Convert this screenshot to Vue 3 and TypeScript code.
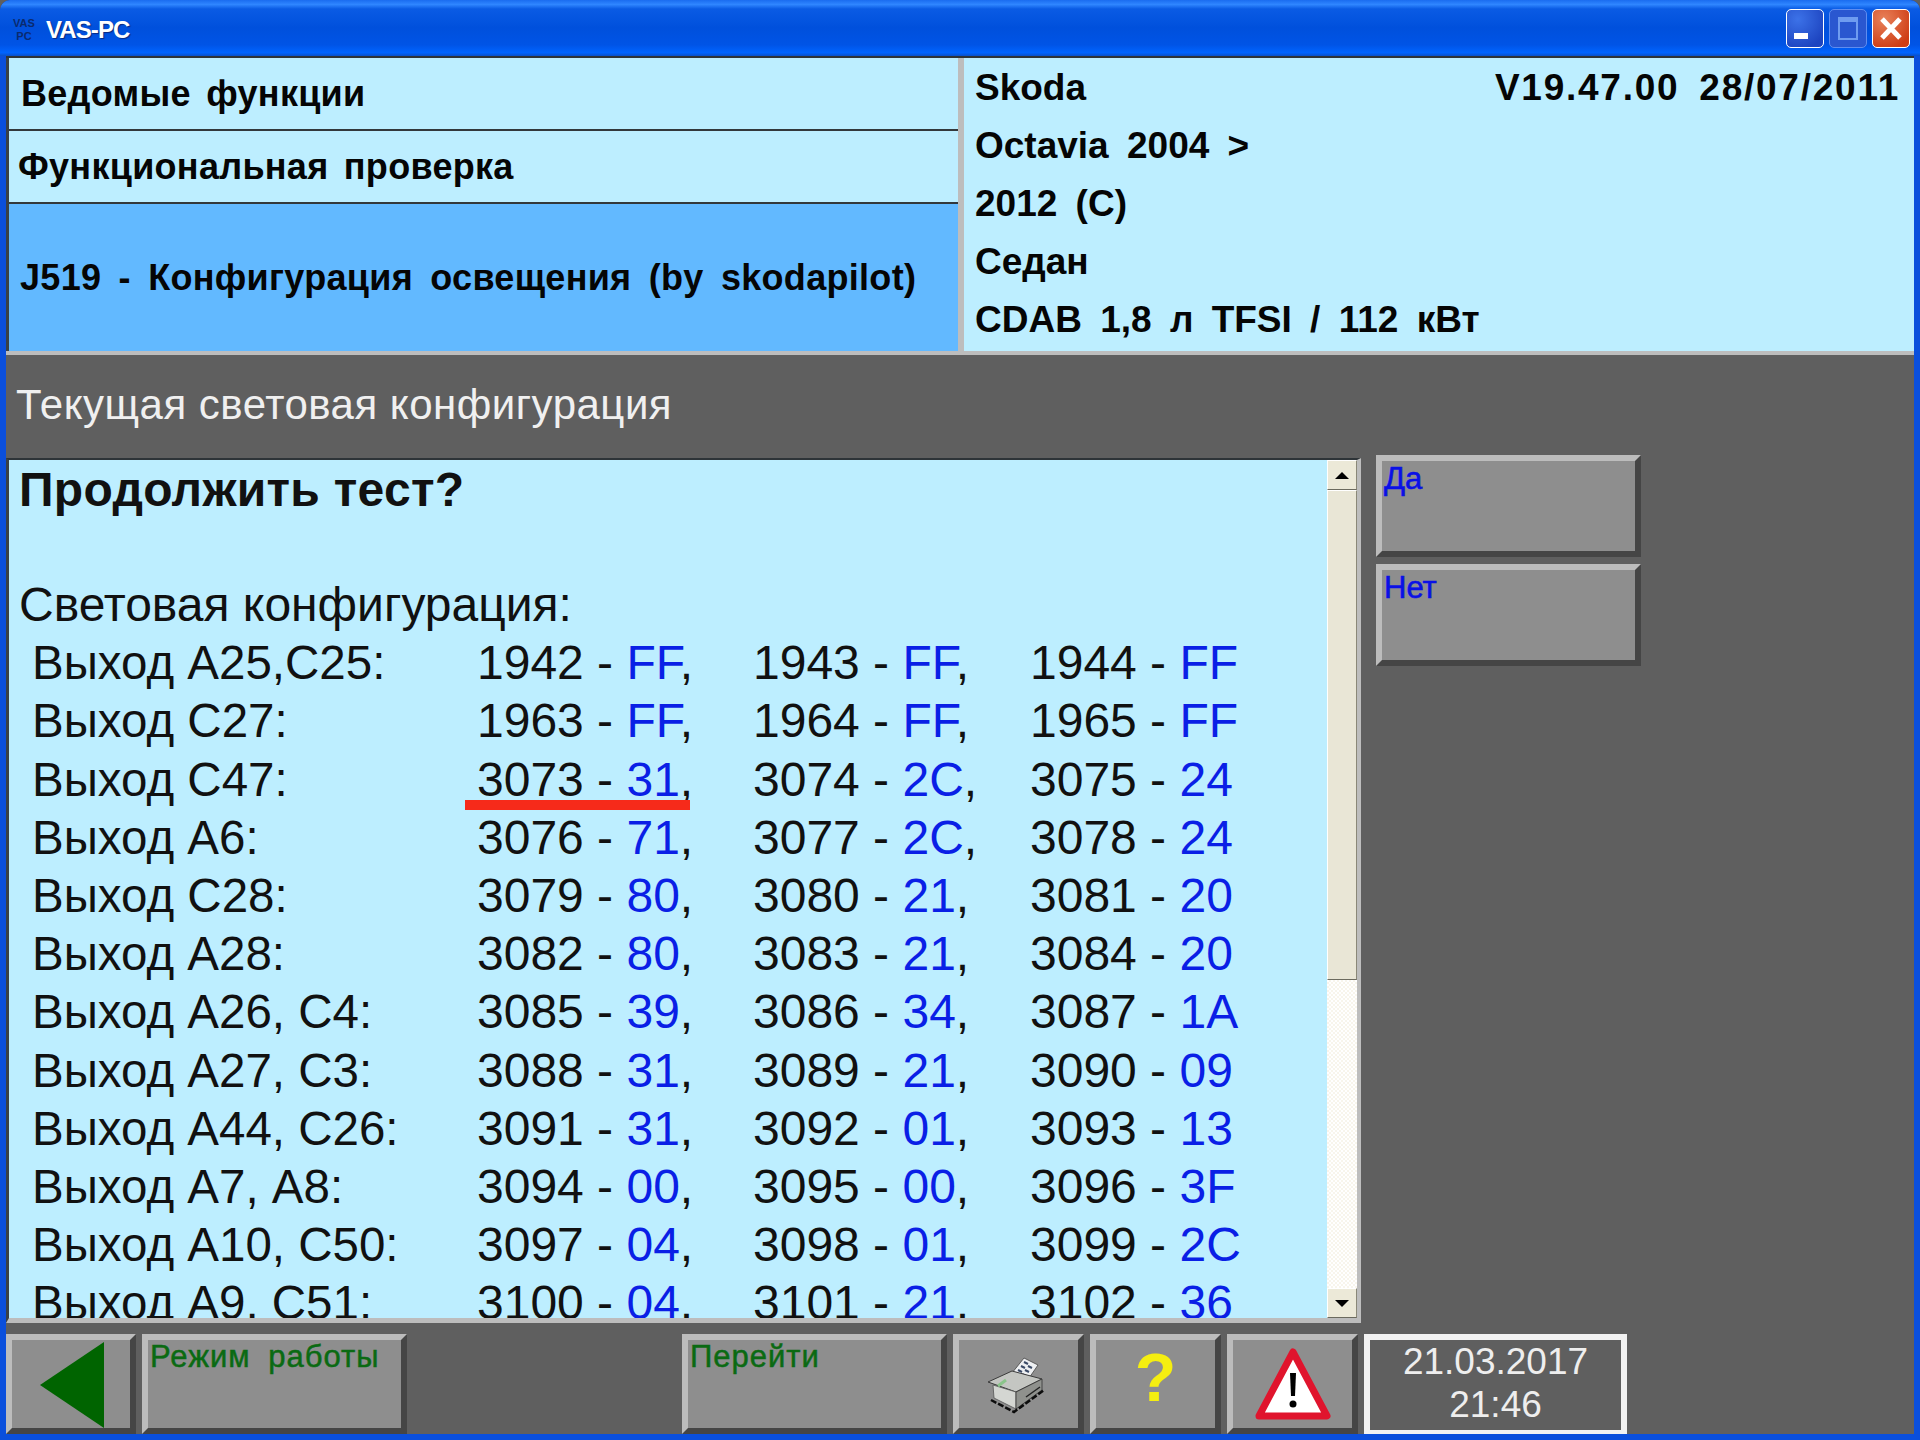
<script setup lang="ts">
interface Cell {
  addr: string
  val: string
}
interface Row {
  label: string
  cells: Cell[]
}

const make = (label: string, ...parts: string[]): Row => ({
  label,
  cells: parts.map((p) => {
    const [addr, val] = p.split(':')
    return { addr, val }
  }),
})

const rows: Row[] = [
  make('Выход А25,С25:', '1942:FF', '1943:FF', '1944:FF'),
  make('Выход С27:', '1963:FF', '1964:FF', '1965:FF'),
  make('Выход С47:', '3073:31', '3074:2C', '3075:24'),
  make('Выход А6:', '3076:71', '3077:2C', '3078:24'),
  make('Выход С28:', '3079:80', '3080:21', '3081:20'),
  make('Выход А28:', '3082:80', '3083:21', '3084:20'),
  make('Выход А26, С4:', '3085:39', '3086:34', '3087:1A'),
  make('Выход А27, С3:', '3088:31', '3089:21', '3090:09'),
  make('Выход А44, С26:', '3091:31', '3092:01', '3093:13'),
  make('Выход А7, А8:', '3094:00', '3095:00', '3096:3F'),
  make('Выход А10, С50:', '3097:04', '3098:01', '3099:2C'),
  make('Выход А9, С51:', '3100:04', '3101:21', '3102:36'),
]
</script>

<template>
  <div class="window">
    <header class="titlebar">
      <div class="app-icon"><span>VAS</span><span>PC</span></div>
      <div class="app-name">VAS-PC</div>
      <div class="win-btns">
        <div class="win-btn">
          <svg width="36" height="37" viewBox="0 0 36 37"><rect x="7" y="23" width="14" height="6" fill="#fff" /></svg>
        </div>
        <div class="win-btn off">
          <svg width="36" height="37" viewBox="0 0 36 37">
            <rect x="9" y="8" width="18" height="21" fill="none" stroke="#6f9cf0" stroke-width="2" />
            <rect x="8" y="7" width="20" height="5" fill="#6f9cf0" />
          </svg>
        </div>
        <div class="win-btn close">
          <svg width="36" height="37" viewBox="0 0 36 37">
            <path d="M9 9 L27 28 M27 9 L9 28" stroke="#fff" stroke-width="5" />
          </svg>
        </div>
      </div>
    </header>

    <div class="body">
      <section class="top">
        <div class="crumbs">
          <div class="crumb first">Ведомые функции</div>
          <div class="crumb second">Функциональная проверка</div>
          <div class="crumb current">J519 - Конфигурация освещения (by skodapilot)</div>
        </div>
        <div class="vehicle">
          <div class="veh-line veh-head"><span>Skoda</span><span class="version">V19.47.00 28/07/2011</span></div>
          <div class="veh-line">Octavia 2004 &gt;</div>
          <div class="veh-line">2012 (C)</div>
          <div class="veh-line">Седан</div>
          <div class="veh-line">CDAB 1,8 л TFSI / 112 кВт</div>
        </div>
      </section>

      <h2 class="subtitle">Текущая световая конфигурация</h2>

      <section class="main">
        <div class="panel">
          <div class="scroll-text">
            <div class="question">Продолжить тест?</div>
            <div class="intro">Световая конфигурация:</div>
            <div v-for="row in rows" :key="row.label" class="row">
              <span class="label">{{ row.label }}</span>
              <span v-for="(c, i) in row.cells" :key="c.addr" class="cell">
                {{ c.addr }} - <b>{{ c.val }}</b>{{ i < 2 ? ',' : '' }}
              </span>
            </div>
            <div class="red-mark"></div>
          </div>
          <div class="scrollbar">
            <div class="sb-btn"><i class="arrow up"></i></div>
            <div class="sb-thumb"></div>
            <div class="sb-track"></div>
            <div class="sb-btn"><i class="arrow down"></i></div>
          </div>
        </div>
        <div class="side">
          <div class="btn side-btn blue">Да</div>
          <div class="btn side-btn blue">Нет</div>
        </div>
      </section>

      <footer class="bottom">
        <div class="btn back">
          <svg width="64" height="86" viewBox="0 0 64 86"><polygon points="0,43 64,0 64,86" fill="#006400" /></svg>
        </div>
        <div class="btn wide green">Режим работы</div>
        <div class="spacer"></div>
        <div class="btn wide green">Перейти</div>
        <div class="btn tool">
          <svg width="90" height="75" viewBox="0 0 90 75">
            <path d="M38 26 L50 11 L64 18 L53 34 Z" fill="#eef0f2" stroke="#444" stroke-width="0.8" />
            <path d="M50 15 L54 17 M47 19 L51 21 M44 23 L48 25 M54 19 L58 21 M51 23 L55 25 M48 27 L52 29" stroke="#3a4a66" stroke-width="2" />
            <path d="M14 35 L38 24 L68 32 L42 45 Z" fill="#c4c6c2" stroke="#3a3a3a" stroke-width="1" />
            <path d="M19 38 L42 45 L42 62 L20 51 Z" fill="#d4d6d2" stroke="#555" stroke-width="0.8" />
            <path d="M42 45 L68 32 L68 43 L42 62 Z" fill="#8f918d" stroke="#333" stroke-width="0.8" />
            <path d="M24 39 L32 33" stroke="#8ac48a" stroke-width="3" />
            <path d="M52 50 L66 40" stroke="#222" stroke-width="1.5" />
            <path d="M17 53 L40 65 L70 43" fill="none" stroke="#0c0c0c" stroke-width="2.5" stroke-dasharray="6 2" />
          </svg>
        </div>
        <div class="btn tool question-btn">?</div>
        <div class="btn tool">
          <svg width="80" height="76" viewBox="0 0 80 76">
            <path d="M40 6 L74 70 L6 70 Z" fill="#fff" stroke="#e0142d" stroke-width="7" stroke-linejoin="round" />
            <path d="M37 27 H43 L42 50 H38 Z" fill="#000" />
            <circle cx="40" cy="58" r="3.5" fill="#000" />
          </svg>
        </div>
        <div class="clock">
          <span>21.03.2017</span>
          <span>21:46</span>
        </div>
      </footer>
    </div>
  </div>
</template>

<style>
html,
body {
  margin: 0;
  padding: 0;
  background: #5f5f5f;
}
</style>

<style scoped>
.window {
  width: 1920px;
  height: 1440px;
  display: flex;
  flex-direction: column;
  box-sizing: border-box;
  overflow: hidden;
  font-family: 'Liberation Sans', Arial, sans-serif;
  background: #0a4fdc;
  padding: 0 6px 6px 6px;
  border-radius: 10px 10px 0 0;
}

.titlebar {
  height: 56px;
  flex: none;
  margin: 0 -6px;
  padding: 0 10px 0 12px;
  display: flex;
  align-items: center;
  color: #fff;
  border-radius: 10px 10px 0 0;
  background: linear-gradient(180deg, #1a6cf0 0%, #2f86ff 8%, #0a5be4 16%, #0050dc 50%, #0054e6 80%, #0064ff 94%, #0a50c8 100%);
}

.app-icon {
  width: 24px;
  padding-top: 3px;
  display: flex;
  flex-direction: column;
  align-items: center;
  font-size: 11px;
  line-height: 13px;
  font-weight: 700;
  color: #0a2a6e;
}

.app-name {
  margin-left: 10px;
  padding-top: 3px;
  font-size: 24px;
  font-weight: 700;
  letter-spacing: -0.9px;
  text-shadow: 1px 1px 1px #0a2a80;
}

.win-btns {
  margin-left: auto;
  display: flex;
  gap: 5px;
}

.win-btn {
  width: 38px;
  height: 39px;
  box-sizing: border-box;
  border: 1px solid #fff;
  border-radius: 5px;
  background: radial-gradient(circle at 30% 25%, #3c72e8, #1d44c0 80%);
  display: flex;
  align-items: center;
  justify-content: center;
}

.win-btn.off {
  border-color: #5f8df0;
  background: #2a57d0;
}

.win-btn.close {
  background: radial-gradient(circle at 30% 25%, #e8815a, #cf3d14 80%);
}

.body {
  flex: 1;
  min-height: 0;
  background: #5f5f5f;
  display: flex;
  flex-direction: column;
}

.top {
  height: 299px;
  flex: none;
  display: flex;
  box-sizing: border-box;
  border-top: 2px solid #2e3438;
  border-bottom: 4px solid #bdbdbd;
  background: #bdbdbd;
}

.crumbs {
  width: 952px;
  flex: none;
  box-sizing: border-box;
  border-left: 3px solid #3a4045;
  display: flex;
  flex-direction: column;
  background: #bdeeff;
  font-weight: 700;
  font-size: 36px;
  letter-spacing: 0.3px;
  word-spacing: 5px;
  color: #050505;
}

.crumb {
  display: flex;
  align-items: center;
  box-sizing: border-box;
  padding-left: 12px;
  white-space: nowrap;
}

.crumb.first,
.crumb.second {
  height: 73px;
  border-bottom: 2px solid #33383b;
}

.crumb.second {
  padding-left: 9px;
}

.crumb.current {
  flex: 1;
  background: #62b9ff;
  padding-left: 11px;
  word-spacing: 7px;
}

.vehicle {
  flex: 1;
  margin-left: 6px;
  box-sizing: border-box;
  padding: 1px 14px 0 11px;
  background: #bdeeff;
  font-weight: 700;
  font-size: 37px;
  word-spacing: 8px;
  color: #050505;
}

.veh-line {
  height: 58px;
  line-height: 58px;
  white-space: nowrap;
}

.veh-head {
  display: flex;
  justify-content: space-between;
}

.version {
  letter-spacing: 1.75px;
}

.subtitle {
  flex: none;
  height: 104px;
  line-height: 100px;
  margin: 0;
  padding-left: 10px;
  box-sizing: border-box;
  font-weight: 400;
  font-size: 42px;
  letter-spacing: 0.5px;
  color: #f0f0f0;
}

.main {
  flex: none;
  height: 873px;
  display: flex;
  align-items: flex-start;
}

.panel {
  width: 1355px;
  height: 865px;
  flex: none;
  box-sizing: border-box;
  display: flex;
  background: #bdeeff;
  border-top: 2px solid #2e3438;
  border-left: 3px solid #3a4045;
  border-bottom: 5px solid #bdbdbd;
  border-right: 4px solid #bdbdbd;
  margin-top: -1px;
}

.scroll-text {
  flex: 1;
  position: relative;
  overflow: hidden;
  padding-left: 10px;
  color: #111;
}

.question {
  font-weight: 700;
  font-size: 48px;
  letter-spacing: 0.3px;
  height: 116px;
  line-height: 60px;
}

.intro,
.row {
  height: 58.2px;
  line-height: 58px;
  white-space: nowrap;
}

.intro {
  font-size: 48px;
}

.row {
  display: grid;
  grid-template-columns: 445px 276px 277px auto;
  padding-left: 13px;
  font-size: 47.5px;
}

.cell {
  font-size: 48px;
}

.cell b {
  font-weight: 400;
  color: #0a1fe6;
}

.red-mark {
  position: absolute;
  left: 456px;
  top: 340px;
  width: 225px;
  height: 10px;
  background: #f62a1a;
}

.scrollbar {
  width: 30px;
  flex: none;
  display: flex;
  flex-direction: column;
  background: repeating-conic-gradient(#f8f5ec 0% 25%, #fff 0% 50%) 0 0 / 4px 4px;
}

.sb-btn {
  width: 30px;
  height: 30px;
  flex: none;
  box-sizing: border-box;
  background: #ece9d8;
  border: 1px solid;
  border-color: #fff #8a8878 #6b6a5e #fff;
  display: flex;
  align-items: center;
  justify-content: center;
}

.sb-thumb {
  height: 490px;
  flex: none;
  box-sizing: border-box;
  background: #e9e6d6;
  border: 1px solid;
  border-color: #fff #8a8878 #6b6a5e #fff;
}

.sb-track {
  flex: 1;
}

.arrow {
  width: 0;
  height: 0;
  border-left: 7px solid transparent;
  border-right: 7px solid transparent;
}

.arrow.up {
  border-bottom: 7px solid #000;
}

.arrow.down {
  border-top: 7px solid #000;
}

.side {
  margin-left: 15px;
  margin-top: -4px;
  display: flex;
  flex-direction: column;
  gap: 7px;
}

.btn {
  box-sizing: border-box;
  border: 6px solid;
  border-color: #bcbcbc #454545 #454545 #bcbcbc;
  background: #8e8e8e;
  flex: none;
}

.side-btn {
  width: 265px;
  height: 102px;
  font-size: 31px;
  line-height: 36px;
  padding-left: 2px;
}

.blue {
  color: #0a10e6;
  -webkit-text-stroke: 0.6px #0a10e6;
}

.green {
  color: #0a6a12;
  -webkit-text-stroke: 0.5px #0a6a12;
}

.bottom {
  flex: none;
  height: 102px;
  padding-top: 2px;
  box-sizing: border-box;
  display: flex;
  align-items: flex-start;
  gap: 6px;
}

.spacer {
  width: 263px;
  flex: none;
}

.back {
  width: 130px;
  height: 100px;
  padding: 2px 0 0 28px;
}

.back svg {
  display: block;
}

.wide {
  width: 265px;
  height: 100px;
  font-size: 31px;
  line-height: 33px;
  padding-left: 2px;
  letter-spacing: 1px;
  word-spacing: 8px;
}

.tool {
  width: 131px;
  height: 100px;
  display: flex;
  align-items: center;
  justify-content: center;
}

.question-btn {
  font-size: 68px;
  font-weight: 700;
  color: #f5ee10;
  padding-bottom: 14px;
}

.clock {
  width: 263px;
  height: 100px;
  flex: none;
  box-sizing: border-box;
  border: 6px solid #f2f2f2;
  border-bottom-width: 4px;
  padding-bottom: 4px;
  display: flex;
  flex-direction: column;
  align-items: center;
  justify-content: center;
  color: #eee;
  font-size: 37px;
  line-height: 43px;
}
</style>
